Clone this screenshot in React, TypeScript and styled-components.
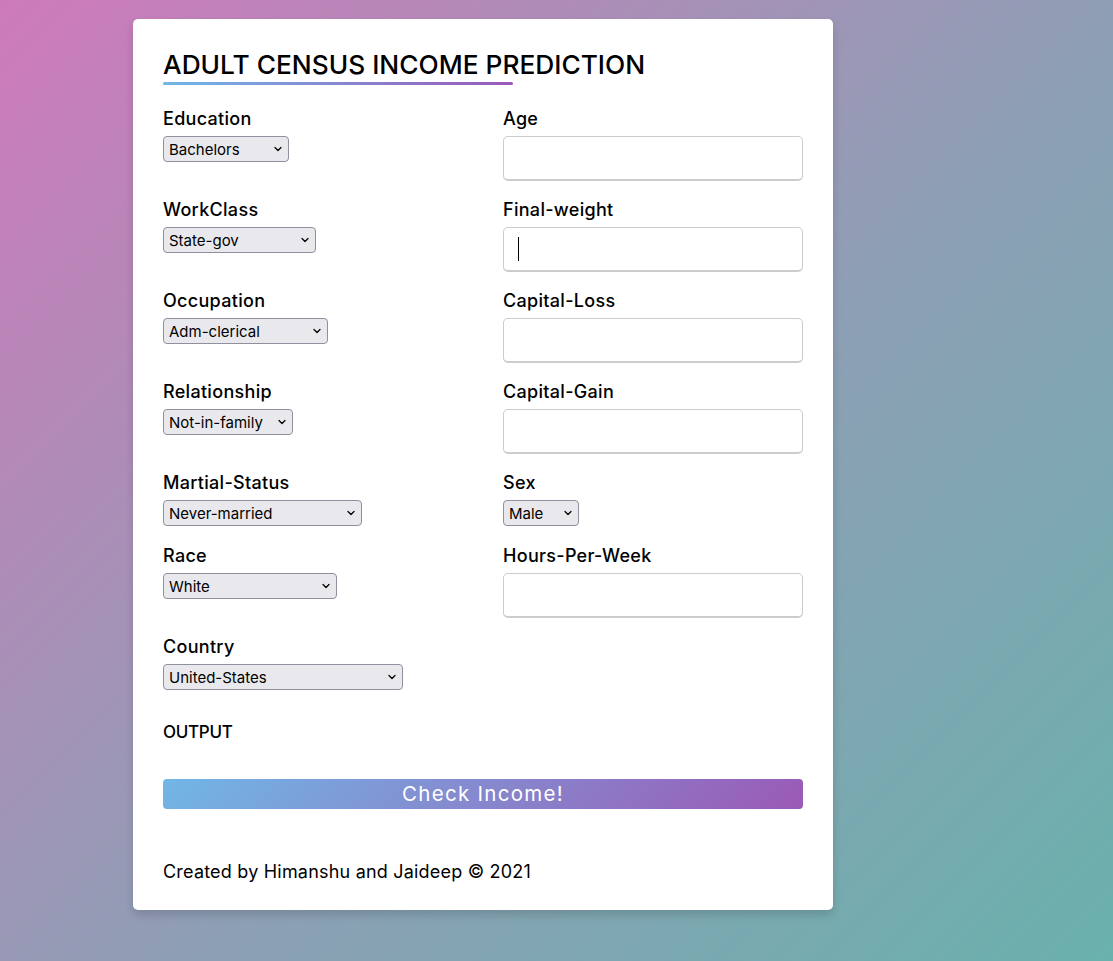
import React from "react";
import styled, { createGlobalStyle } from "styled-components";
import { ChevronDown } from "lucide-react";

const Global = createGlobalStyle`
  * { box-sizing: border-box; }
  html, body { margin: 0; padding: 0; }
  body {
    font-family: Inter, "Open Sans", sans-serif;
    min-height: 961px;
    background: linear-gradient(135deg, #ce7aba 0%, #8e9fb5 55%, #6ab1ad 100%);
  }
`;

const Page = styled.div`
  min-height: 961px;
  padding: 19px 0 0 133px;
`;

const Card = styled.div`
  width: 700px;
  height: 891px;
  background: #fff;
  border-radius: 5px;
  padding: 25px 30px 0;
  box-shadow: 0 5px 10px rgba(0, 0, 0, 0.15);
  color: #000;
`;

const Title = styled.h1`
  position: relative;
  margin: 0 0 20px;
  font-size: 26.3px;
  font-weight: 500;
  line-height: 41px;
  &::before {
    content: "";
    position: absolute;
    left: 0;
    bottom: 0;
    height: 3px;
    width: 350px;
    border-radius: 5px;
    background: linear-gradient(90deg, #71b7e6, #9b59b6);
  }
`;

const Grid = styled.div`
  display: flex;
  flex-wrap: wrap;
  justify-content: space-between;
`;

const Field = styled.div`
  width: 300px;
  margin-bottom: 15px;
  &:nth-child(odd) { width: 340px; }
`;

const Label = styled.span`
  display: block;
  font-size: 18px;
  font-weight: 500;
  letter-spacing: 0.3px;
  line-height: 24px;
  padding-top: 2px;
  margin-bottom: 5px;
`;

const TextInput = styled.input`
  display: block;
  width: 300px;
  height: 45px;
  border: 1px solid #ccc;
  border-bottom-width: 2px;
  border-radius: 5px;
  padding-left: 15px;
  font-size: 16px;
  outline: none;
  background: #fff;
`;

const SelectWrap = styled.div<{ $w: number }>`
  position: relative;
  width: ${(p) => p.$w}px;
  margin: 1px 0;
`;

const Select = styled.select`
  appearance: none;
  -webkit-appearance: none;
  display: block;
  width: 100%;
  height: 26px;
  border: 1px solid #8f8f9d;
  border-radius: 4px;
  background: #e9e9ed;
  color: #000;
  font-family: Inter, "Open Sans", sans-serif;
  font-size: 15px;
  padding: 0 20px 0 5px;
  outline: none;
`;

const Chevron = styled(ChevronDown)`
  position: absolute;
  right: 5px;
  top: 7px;
  width: 12px;
  height: 12px;
  pointer-events: none;
  color: #000;
`;

const Caret = styled.span`
  position: absolute;
  left: 15px;
  top: 10px;
  width: 1px;
  height: 24px;
  background: #000;
`;

const InputWrap = styled.div`
  position: relative;
`;

const Output = styled.div`
  margin-top: 15px;
  font-size: 17px;
  font-weight: 500;
  line-height: 22px;
  letter-spacing: -0.3px;
`;

const Button = styled.button`
  display: block;
  width: 100%;
  height: 30px;
  margin-top: 36px;
  border: none;
  border-radius: 4px;
  color: #fff;
  font-family: Inter, "Open Sans", sans-serif;
  font-size: 20.5px;
  font-weight: 400;
  letter-spacing: 1.3px;
  background: linear-gradient(135deg, #71b7e6, #9b59b6);
  padding: 0;
  line-height: 30px;
`;

const Footer = styled.p`
  margin: 51px 0 0;
  font-size: 18px;
  font-weight: 400;
  letter-spacing: 0.2px;
  line-height: 24px;
`;

type SelField = { kind: "select"; label: string; value: string; w: number };
type InField = { kind: "input"; label: string; caret?: boolean };
type F = SelField | InField | { kind: "empty" };

const fields: F[] = [
  { kind: "select", label: "Education", value: "Bachelors", w: 126 },
  { kind: "input", label: "Age" },
  { kind: "select", label: "WorkClass", value: "State-gov", w: 153 },
  { kind: "input", label: "Final-weight", caret: true },
  { kind: "select", label: "Occupation", value: "Adm-clerical", w: 165 },
  { kind: "input", label: "Capital-Loss" },
  { kind: "select", label: "Relationship", value: "Not-in-family", w: 130 },
  { kind: "input", label: "Capital-Gain" },
  { kind: "select", label: "Martial-Status", value: "Never-married", w: 199 },
  { kind: "select", label: "Sex", value: "Male", w: 76 },
  { kind: "select", label: "Race", value: "White", w: 174 },
  { kind: "input", label: "Hours-Per-Week" },
  { kind: "select", label: "Country", value: "United-States", w: 240 },
  { kind: "empty" },
];

export default function App() {
  return (
    <>
      <Global />
      <Page>
        <Card>
          <Title>ADULT CENSUS INCOME PREDICTION</Title>
          <Grid>
            {fields.map((f, i) => {
              if (f.kind === "empty") return <Field key={i} />;
              return (
                <Field key={i}>
                  <Label>{f.label}</Label>
                  {f.kind === "select" ? (
                    <SelectWrap $w={f.w}>
                      <Select defaultValue={f.value}>
                        <option>{f.value}</option>
                      </Select>
                      <Chevron strokeWidth={2.5} />
                    </SelectWrap>
                  ) : (
                    <InputWrap>
                      <TextInput type="text" />
                      {f.caret && <Caret />}
                    </InputWrap>
                  )}
                </Field>
              );
            })}
          </Grid>
          <Output>OUTPUT</Output>
          <Button>Check Income!</Button>
          <Footer>Created by Himanshu and Jaideep © 2021</Footer>
        </Card>
      </Page>
    </>
  );
}
